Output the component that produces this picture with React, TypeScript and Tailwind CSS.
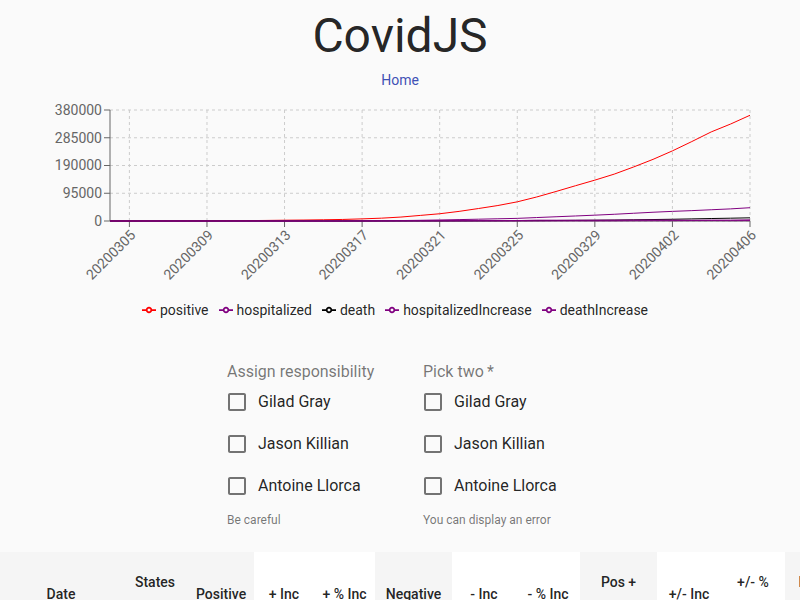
import React from 'react'

const DATES = [
  ...Array.from({ length: 28 }, (_, i) => `202003${String(i + 4).padStart(2, '0')}`),
  ...Array.from({ length: 6 }, (_, i) => `2020040${i + 1}`),
]

const POSITIVE = [
  150, 220, 320, 420, 560, 730, 1000, 1300, 1900, 2700, 3300, 4200, 5300, 7300, 9700, 13500, 19100,
  24800, 32900, 42700, 53000, 65600, 82200, 101100, 120700, 139900, 160500, 185000, 211000, 240000,
  272000, 305000, 332000, 362000,
]
const HOSPITALIZED = [
  ...Array(13).fill(0),
  400, 800, 1500, 2400, 3500, 4800, 6200, 7600, 9000, 11800, 14500, 17200, 20000, 23000, 26500, 30000,
  33000, 35500, 38500, 41500, 45500,
]
const DEATH = [
  11, 12, 14, 17, 21, 22, 28, 36, 40, 49, 57, 68, 90, 112, 160, 218, 270, 350, 470, 600, 780, 1050,
  1300, 1700, 2200, 2600, 3100, 4000, 5000, 6000, 7200, 8500, 9600, 10900,
]
const diff = (a: number[]) => a.map((v, i) => (i === 0 ? 0 : Math.max(0, v - a[i - 1])))

const SERIES = [
  { name: 'positive', color: 'red', data: POSITIVE },
  { name: 'hospitalized', color: 'purple', data: HOSPITALIZED },
  { name: 'death', color: 'black', data: DEATH },
  { name: 'hospitalizedIncrease', color: 'purple', data: diff(HOSPITALIZED) },
  { name: 'deathIncrease', color: 'purple', data: diff(DEATH) },
]

const LEFT = 110
const RIGHT = 750
const TOP = 110
const BOTTOM = 221
const MAX = 380000

const xAt = (i: number) => LEFT + (i * (RIGHT - LEFT)) / (DATES.length - 1)
const yAt = (v: number) => BOTTOM - (v / MAX) * (BOTTOM - TOP)

const Y_TICKS = [380000, 285000, 190000, 95000, 0]
const X_TICKS = [1, 5, 9, 13, 17, 21, 25, 29, 33]

function Chart() {
  return (
    <svg width="800" height="200" viewBox="0 95 800 200" className="mt-[5px] block">
      {/* grid */}
      <g stroke="#ccc" strokeDasharray="3 3" fill="none">
        {Y_TICKS.map(t => (
          <line key={t} x1={LEFT} x2={RIGHT} y1={yAt(t)} y2={yAt(t)} />
        ))}
        {X_TICKS.map(i => (
          <line key={i} x1={xAt(i)} x2={xAt(i)} y1={TOP} y2={BOTTOM} />
        ))}
      </g>

      {/* axes */}
      <g stroke="#666" fill="none">
        <line x1={LEFT} x2={LEFT} y1={TOP} y2={BOTTOM} />
        <line x1={LEFT} x2={RIGHT} y1={BOTTOM} y2={BOTTOM} />
        {Y_TICKS.map(t => (
          <line key={t} x1={LEFT - 6} x2={LEFT} y1={yAt(t)} y2={yAt(t)} />
        ))}
        {X_TICKS.map(i => (
          <line key={i} x1={xAt(i)} x2={xAt(i)} y1={BOTTOM} y2={BOTTOM + 6} />
        ))}
      </g>

      <g fill="#666" fontSize="14">
        {Y_TICKS.map(t => (
          <text key={t} x={LEFT - 8} y={yAt(t)} dy="0.355em" textAnchor="end">
            {t}
          </text>
        ))}
        {X_TICKS.map(i => {
          const x = xAt(i)
          const y = BOTTOM + 8
          return (
            <text key={i} x={x} y={y} dy="0.71em" textAnchor="end" transform={`rotate(-45, ${x}, ${y})`}>
              {DATES[i]}
            </text>
          )
        })}
      </g>

      {/* lines */}
      {SERIES.map(s => (
        <path
          key={s.name}
          d={s.data.map((v, i) => `${i === 0 ? 'M' : 'L'}${xAt(i).toFixed(2)},${yAt(v).toFixed(2)}`).join('')}
          stroke={s.color}
          strokeWidth={1}
          fill="none"
        />
      ))}
    </svg>
  )
}

function LegendIcon({ color }: { color: string }) {
  return (
    <svg width="14" height="14" viewBox="0 0 32 32" className="mr-1">
      <path
        strokeWidth="4"
        fill="none"
        stroke={color}
        d="M0,16h10.67A5.33,5.33,0,1,1,21.33,16H32M21.33,16A5.33,5.33,0,1,1,10.67,16"
      />
    </svg>
  )
}

function CheckboxIcon() {
  return (
    <svg width="24" height="24" viewBox="0 0 24 24" fill="rgba(0,0,0,0.54)">
      <path d="M19 5v14H5V5h14m0-2H5c-1.1 0-2 .9-2 2v14c0 1.1.9 2 2 2h14c1.1 0 2-.9 2-2V5c0-1.1-.9-2-2-2z" />
    </svg>
  )
}

const PEOPLE = ['Gilad Gray', 'Jason Killian', 'Antoine Llorca']

function CheckGroup({ label, helper }: { label: string; helper: string }) {
  return (
    <div className="flex w-[150px] flex-col">
      <label className="text-base leading-4 text-[rgba(0,0,0,0.54)]">{label}</label>
      <div className="mt-px flex flex-col">
        {PEOPLE.map(p => (
          <label key={p} className="-ml-[11px] flex h-[42px] items-center">
            <span className="p-[9px]">
              <CheckboxIcon />
            </span>
            <span className="text-base">{p}</span>
          </label>
        ))}
      </div>
      <p className="mt-[3px] text-xs leading-5 text-[rgba(0,0,0,0.54)]">{helper}</p>
    </div>
  )
}

type Col = { label: string; w: string; white?: boolean }

const COLUMNS: Col[] = [
  { label: 'Date', w: 'w-[122px]' },
  { label: 'States Tested', w: 'w-[66px]' },
  { label: 'Positive', w: 'w-[66px]' },
  { label: '+ Inc', w: 'w-[60px]', white: true },
  { label: '+ % Inc', w: 'w-[61px]', white: true },
  { label: 'Negative', w: 'w-[77px]' },
  { label: '- Inc', w: 'w-[64px]', white: true },
  { label: '- % Inc', w: 'w-[64px]', white: true },
  { label: 'Pos + Neg', w: 'w-[77px]' },
  { label: '+/- Inc', w: 'w-[64px]', white: true },
  { label: '+/- % Inc', w: 'w-[64px]', white: true },
  { label: 'Positive %', w: 'w-[77px]' },
  { label: 'Deaths', w: 'w-[77px]', white: true },
]

const ROWS = [
  ['20200406', '56', '362000', '30000', '9.0%', '1700000', '120000', '7.6%', '2062000', '150000', '7.8%', '17.6%', '10900'],
  ['20200405', '56', '332000', '27000', '8.9%', '1580000', '110000', '7.5%', '1912000', '137000', '7.7%', '17.4%', '9600'],
  ['20200404', '56', '305000', '33000', '12.1%', '1470000', '150000', '11.4%', '1775000', '183000', '11.5%', '17.2%', '8500'],
]

export default function App() {
  return (
    <div className="h-screen overflow-hidden bg-[#fafafa] font-['Roboto',sans-serif] text-[rgba(0,0,0,0.87)]">
      <h1 className="mt-2 h-14 text-center text-[48px] font-normal leading-[56px]">CovidJS</h1>
      <div className="mt-[6px] text-center text-sm leading-5">
        <a href="#" className="text-[#3f51b5]">
          Home
        </a>
      </div>

      <Chart />

      <ul className="mt-[5px] flex h-5 items-center justify-center text-sm">
        {SERIES.map(s => (
          <li key={s.name} className="mr-[10px] flex items-center">
            <LegendIcon color={s.color} />
            <span>{s.name}</span>
          </li>
        ))}
      </ul>

      <div className="mt-[44px] flex justify-center gap-[46px]">
        <CheckGroup label="Assign responsibility" helper="Be careful" />
        <CheckGroup label={'Pick two\u2009*'} helper="You can display an error" />
      </div>

      <div className="mt-[22px] overflow-hidden">
        <table className="w-[939px] table-fixed border-collapse">
          <colgroup>
            {COLUMNS.map(c => (
              <col key={c.label} className={c.w} />
            ))}
          </colgroup>
          <thead>
            <tr>
              {COLUMNS.map(c => (
                <th
                  key={c.label}
                  className={`h-[84px] px-2 text-center align-middle text-sm font-medium leading-6 ${
                    c.white ? 'bg-white' : 'bg-[#f5f5f5]'
                  }`}
                >
                  {c.label}
                </th>
              ))}
            </tr>
          </thead>
          <tbody>
            {ROWS.map(r => (
              <tr key={r[0]} className="border-b border-[#e0e0e0]">
                {r.map((v, i) => (
                  <td key={i} className="px-2 py-4 text-center text-sm">
                    {v}
                  </td>
                ))}
              </tr>
            ))}
          </tbody>
        </table>
      </div>
    </div>
  )
}
